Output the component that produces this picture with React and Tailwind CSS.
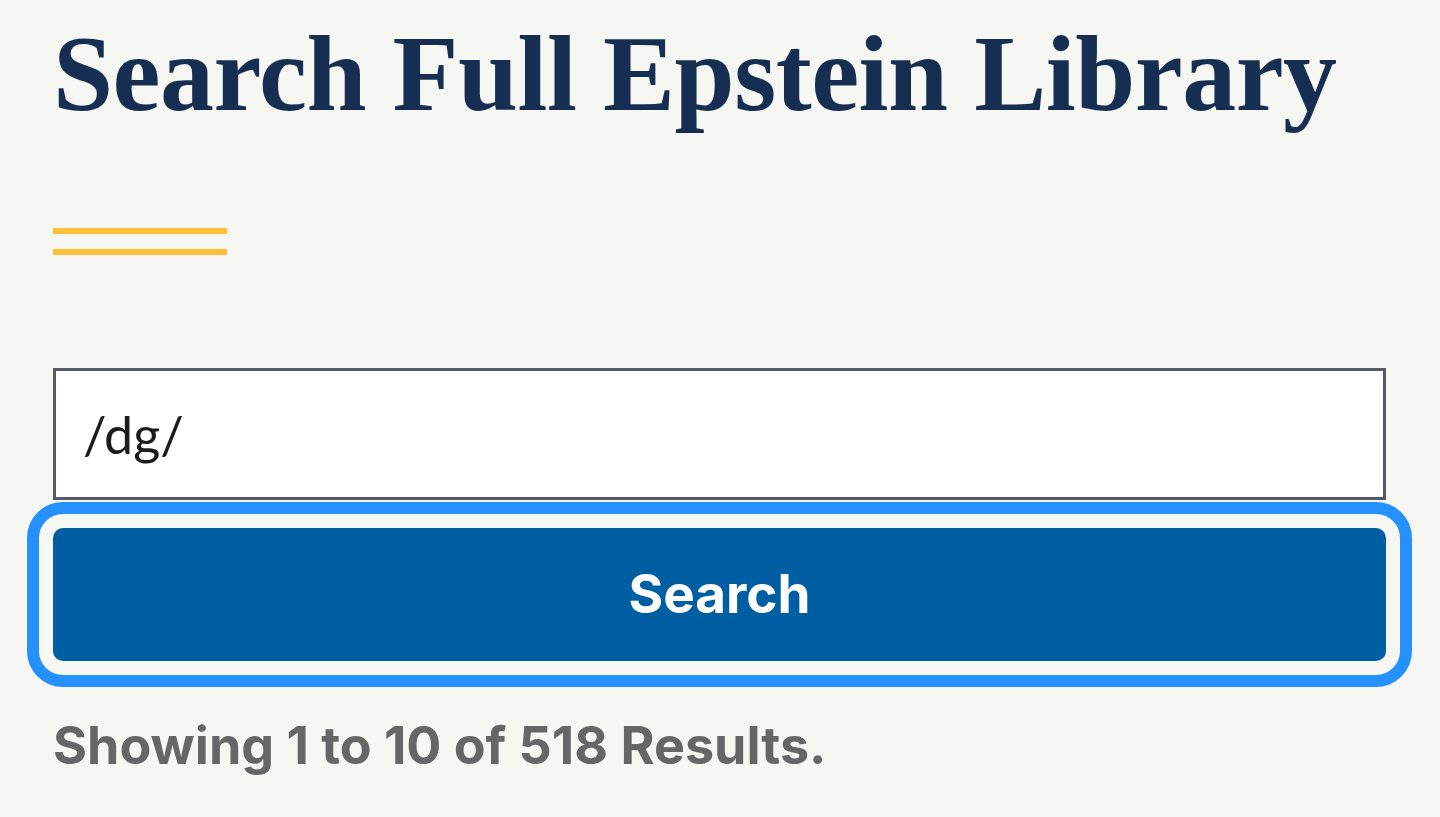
import React from 'react';

const App = () => {
  return (
    <div className="min-h-[817px] w-full bg-[#f6f6f2] overflow-hidden">
      <div className="pl-[53px] pr-[54px] pt-[14px]">
        <h1 className="font-['Liberation_Serif',serif] font-bold text-[108px] leading-[120px] text-[#162e51] tracking-[-0.5px] whitespace-nowrap">
          Search Full Epstein Library
        </h1>

        <div className="mt-[94px] flex flex-col gap-[15px] w-[174px]">
          <div className="h-[6px] bg-[#fdbf37]" />
          <div className="h-[6px] bg-[#fdbf37]" />
        </div>

        <div className="mt-[113px]">
          <input
            type="text"
            defaultValue="/dg/"
            className="block w-full h-[132px] border-[3px] border-[#565c65] bg-white px-[27px] font-['Lato',sans-serif] text-[52px] text-[#1b1b1b] outline-none"
          />
        </div>

        <button
          type="button"
          className="mt-[28px] block w-full h-[133px] rounded-[10px] bg-[#005ea2] text-white font-['Inter',sans-serif] font-bold text-[53px] outline-[12px] outline-solid outline-[#2491ff] outline-offset-[14px]"
        >
          Search
        </button>

        <p className="mt-[55px] font-['Inter',sans-serif] font-bold text-[52px] leading-[60px] text-[#666666]">
          Showing 1 to 10 of 518 Results.
        </p>
      </div>
    </div>
  );
};

export default App;
